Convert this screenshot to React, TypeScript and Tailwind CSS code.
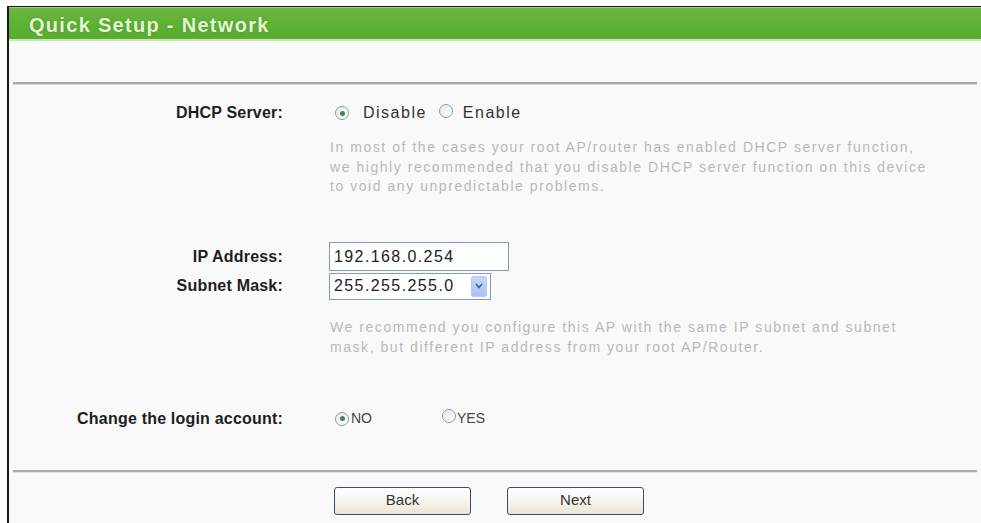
import React from 'react'

function Radio({ checked }: { checked?: boolean }) {
  return (
    <span className="inline-flex items-center justify-center w-[14px] h-[14px] rounded-full border border-[#8a9aa8] bg-gradient-to-br from-[#e4e8ec] to-white">
      {checked && <span className="w-[5px] h-[5px] rounded-full bg-[#3d8a4a]" />}
    </span>
  )
}

function Label({ children }: { children: React.ReactNode }) {
  return <div className="w-[274px] text-right font-bold text-[16px] text-[#1e1e1e] tracking-[0.2px]">{children}</div>
}

export default function App() {
  return (
    <div className="w-[981px] h-[523px] bg-white overflow-hidden" style={{ fontFamily: '"Liberation Sans", Arial, sans-serif' }}>
      <div className="ml-[7px] mt-[6px] h-[517px] border-l-2 border-t border-[#151a15] bg-[#f8f9f8] flex flex-col">
        {/* title bar */}
        <div className="h-[34px] border-t border-[#9ad46f] bg-gradient-to-b from-[#6fb543] via-[#5db234] to-[#58ac31] border-b-2 border-b-[#c8eab0] flex items-center pl-[20px] pt-[3px]">
          <span className="text-[20px] font-bold text-[#e3f6d2] tracking-[1.3px] [text-shadow:0_0_2px_#4a8a28]">Quick Setup - Network</span>
        </div>

        <div className="h-[41px]" />
        <div className="mx-[4px] h-[3px] bg-[#a5aca8] border-b border-[#d6dad8]" />

        {/* DHCP server */}
        <div className="h-[45px] flex items-end pb-[5px]">
          <Label>DHCP Server:</Label>
          <div className="ml-[52px] flex items-center text-[16px] text-[#333] tracking-[1.5px]">
            <Radio checked />
            <span className="ml-[14px]">Disable</span>
            <span className="ml-[12px]"><Radio /></span>
            <span className="ml-[10px]">Enable</span>
          </div>
        </div>
        <div className="pl-[321px] text-[14px] leading-[19.5px] text-[#b8b8b8] tracking-[1.55px] pt-[8px]">
          <div>In most of the cases your root AP/router has enabled DHCP server function,</div>
          <div>we highly recommended that you disable DHCP server function on this device</div>
          <div>to void any unpredictable problems.</div>
        </div>

        {/* IP / mask */}
        <div className="h-[45px]" />
        <div className="h-[30px] flex items-center">
          <Label>IP Address:</Label>
          <div className="ml-[46px] w-[180px] h-[29px] border border-[#7f9db9] bg-white flex items-center pl-[4px] text-[16px] text-[#222] tracking-[1.4px]">
            192.168.0.254
          </div>
        </div>
        <div className="h-[29px] flex items-center">
          <Label>Subnet Mask:</Label>
          <div className="ml-[46px] w-[162px] h-[27px] border border-[#7f9db9] bg-white flex items-center justify-between pl-[4px] pr-[3px] text-[16px] text-[#222] tracking-[1.4px]">
            <span>255.255.255.0</span>
            <span className="w-[16px] h-[21px] rounded-[2px] bg-gradient-to-b from-[#c6d6fb] to-[#a9c0f5] border border-[#b5c8f2] flex items-center justify-center">
              <svg width="8" height="6" viewBox="0 0 8 6"><path d="M1 1 L4 4.5 L7 1" fill="none" stroke="#4d6185" strokeWidth="1.6" /></svg>
            </span>
          </div>
        </div>
        <div className="pl-[321px] text-[14px] leading-[20px] text-[#b8b8b8] tracking-[1.55px] pt-[16px]">
          <div>We recommend you configure this AP with the same IP subnet and subnet</div>
          <div>mask, but different IP address from your root AP/Router.</div>
        </div>

        {/* login account */}
        <div className="h-[48px]" />
        <div className="h-[28px] flex items-center">
          <Label>Change the login account:</Label>
          <div className="ml-[52px] flex items-center text-[14px] text-[#444]">
            <Radio checked />
            <span className="ml-[2px]">NO</span>
            <span className="ml-[70px]"><Radio /></span>
            <span className="ml-[1px]">YES</span>
          </div>
        </div>

        <div className="h-[37px]" />
        <div className="mx-[4px] h-[3px] bg-[#9fb0a8] border-b border-[#dfe6e2]" />

        {/* buttons */}
        <div className="pt-[14px] flex gap-[36px] pl-[325px]">
          <button className="w-[137px] h-[28px] rounded-[3px] border border-[#3a4d6e] bg-gradient-to-b from-white via-[#f7f4ee] to-[#ece4d6] text-[15px] text-[#333]">Back</button>
          <button className="w-[137px] h-[28px] rounded-[3px] border border-[#3a4d6e] bg-gradient-to-b from-white via-[#f7f4ee] to-[#ece4d6] text-[15px] text-[#333]">Next</button>
        </div>
      </div>
    </div>
  )
}
